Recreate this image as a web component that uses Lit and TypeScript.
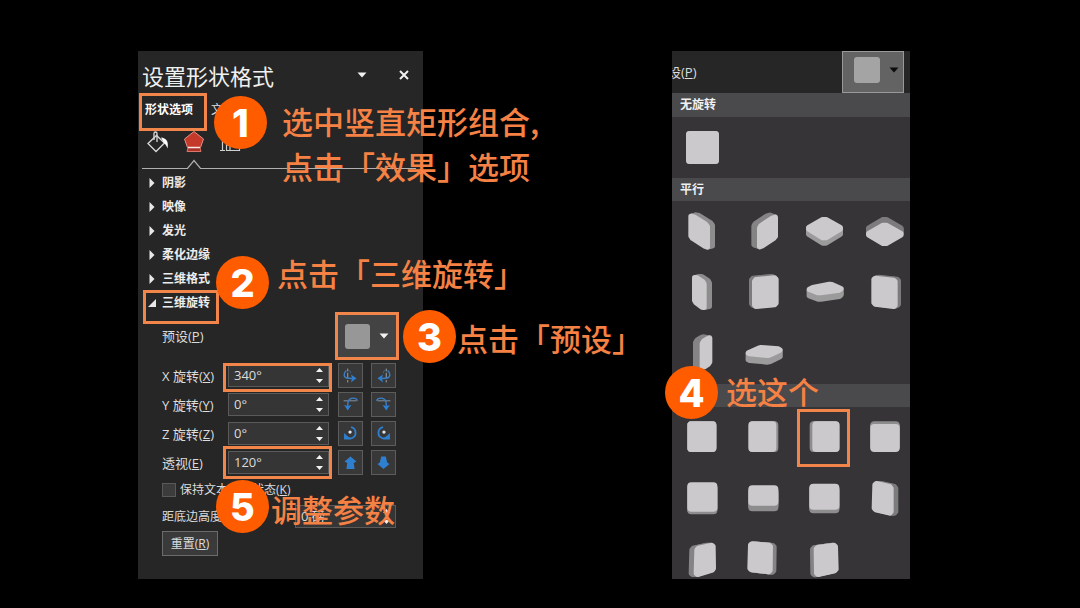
import { LitElement, html, svg, css } from "lit";
import { customElement } from "lit/decorators.js";

type Point = [number, number];
interface Thumb {
  face: Point[];
  depth: Point;
  side?: string;
  round?: number;
  picked?: boolean;
}

const rect = (x1: number, y1: number, x2: number, y2: number): Point[] => [
  [x1 + 12, y1 + 12],
  [x2 - 12, y1 + 12],
  [x2 - 12, y2 - 12],
  [x1 + 12, y2 - 12],
];

const flat = (face: Point[], depth: Point, side?: string): Thumb => ({ face, depth, side, round: 12 });

const NONE: Thumb[] = [flat(rect(42, 42, 141, 141), [0, 0])];

const PARALLEL: Thumb[] = [
  { face: [[57, 46], [66, 48], [100, 69], [106, 77], [106, 138], [98, 135], [62, 112], [57, 105]], depth: [15, -4] },
  { face: [[80, 81], [84, 74], [119, 51], [127, 49], [127, 106], [122, 112], [88, 134], [80, 137]], depth: [-17, -6], side: "#858485" },
  { face: [[44, 80], [86, 56], [96, 56], [139, 80], [139, 84], [96, 110], [86, 110], [44, 84]], depth: [0, 16], side: "#9c9b9c" },
  { face: [[41, 98], [84, 73], [94, 73], [138, 98], [138, 102], [94, 127], [84, 127], [41, 102]], depth: [0, -17], side: "#7d7c7d" },
  { face: [[68, 47], [75, 48], [92, 59], [96, 66], [96, 136], [90, 135], [72, 122], [68, 115]], depth: [16, -3] },
  { face: [[65, 58], [69, 53], [125, 48], [129, 52], [129, 123], [125, 128], [69, 133], [65, 129]], depth: [-9, -4], side: "#7d7c7d" },
  { face: [[46, 82], [56, 77], [106, 67], [114, 68], [141, 80], [136, 84], [80, 92], [72, 92]], depth: [0, 19], side: "#9c9b9c" },
  { face: [[57, 52], [61, 49], [116, 55], [120, 59], [120, 130], [116, 133], [61, 126], [57, 122]], depth: [10, -3], side: "#7d7c7d" },
  { face: [[91, 62], [95, 55], [107, 47], [113, 45], [113, 117], [108, 124], [97, 131], [91, 131]], depth: [-20, -3], side: "#858485" },
  { face: [[46, 90], [76, 76], [84, 74], [136, 78], [141, 81], [112, 95], [104, 97], [50, 92]], depth: [0, 20], side: "#9c9b9c" },
];

const PERSPECTIVE: Thumb[] = [
  flat(rect(46, 43, 133, 135), [0, 0]),
  flat(rect(46, 43, 130, 135), [6, 0]),
  { ...flat(rect(55, 43, 137, 135), [-8, 0]), picked: true },
  flat(rect(46, 51, 134, 135), [0, -8]),
  flat(rect(46, 43, 136, 131), [0, 8]),
  flat(rect(46, 52, 136, 113), [0, 17]),
  flat(rect(46, 47, 136, 125), [0, 11]),
  { face: [[60, 51], [64, 47], [104, 56], [108, 61], [108, 131], [104, 135], [62, 125], [58, 120]], depth: [14, 0], side: "#7d7c7d" },
  { face: [[75, 63], [79, 58], [119, 49], [123, 52], [124, 118], [121, 123], [77, 136], [73, 133]], depth: [-15, 0], side: "#858485" },
  { face: [[53, 48], [57, 45], [108, 49], [112, 53], [111, 124], [107, 128], [55, 122], [51, 118]], depth: [11, 1], side: "#858485" },
  { face: [[67, 60], [71, 56], [120, 49], [124, 53], [126, 120], [122, 125], [72, 136], [68, 132]], depth: [-11, 1], side: "#858485" },
];

const drawThumb = (t: Thumb) => {
  const at = (k: number) =>
    t.face.map(([x, y]) => `${x + t.depth[0] * k},${y + t.depth[1] * k}`).join(" ");
  const side = t.side ?? "#8e8d8e";
  return html`<svg viewBox="0 0 183 183" width="61" height="61" aria-hidden="true"
    stroke-width=${(t.round ?? 8) * 2} stroke-linejoin="round">
    ${[1, 0.75, 0.5, 0.25].map(
      (k) => svg`<polygon points=${at(k)} fill=${side} stroke=${side}></polygon>`
    )}
    <polygon points=${at(0)} fill="#cbc9cb" stroke="#cbc9cb"></polygon>
  </svg>`;
};

const turnSide = svg`
  <path d="M9.500 5v3M9.500 9.500v6M9.500 17.500v2.500" stroke="#a4abb3" fill="none"/>
  <path d="M8 7c-3 2.500-3.500 7 .5 8.200 2 .6 4 .5 6 .5" fill="none" stroke="#3a7fc6" stroke-width="1.500"/>
  <path d="M11 7c1 0 1.500 1.500 1.500 3" fill="none" stroke="#3a6ea3"/>
  <path d="M13 11.500l6 4-6 4.500 1.200-4.300z" fill="#2f7fd0"/>`;
const turnDown = svg`
  <path d="M5 8.500h14" stroke="#8e98a3" fill="none"/>
  <path d="M20 8.500c-1-3.500-8-4.500-10 .5-.5 1.500-.5 3-.5 5" fill="none" stroke="#3a7fc6" stroke-width="1.500"/>
  <path d="M5.500 13l4 1 4-1-4 6z" fill="#2f7fd0"/>`;
const spin = svg`
  <path d="M13 5.500c6.500 1.500 6.500 10 1 12-2 .5-4 .3-6-1.500" fill="none" stroke="#2f7fd0" stroke-width="2"/>
  <path d="M5.500 12v7h7.500z" fill="#2f7fd0"/><circle cx="12" cy="11" r="1.800" fill="#dfe6ee"/>`;
const arrowUp = svg`<path d="M12.500 6l6.500 5.500-3 1.500 1 6.500h-9l1-6.500-3-1.500z" fill="#2f7fd0"/>`;
const arrowDown = svg`<path d="M12.500 19.500L19 14l-2.500-1.500L15 6h-5l-1.500 6.500L6 14z" fill="#2f7fd0"/>`;

interface Axis {
  id: string;
  name: string;
  key: string;
  value: string;
  mark: string;
  glyph: unknown;
  second?: unknown;
  tips: [string, string];
}

const AXES: Axis[] = [
  { id: "rx", name: "X 旋转", key: "X", value: "340°", mark: "mark mark-x", glyph: turnSide, tips: ["向左", "向右"] },
  { id: "ry", name: "Y 旋转", key: "Y", value: "0°", mark: "", glyph: turnDown, tips: ["向上", "向下"] },
  { id: "rz", name: "Z 旋转", key: "Z", value: "0°", mark: "", glyph: spin, tips: ["顺时针", "逆时针"] },
  { id: "persp", name: "透视", key: "E", value: "120°", mark: "mark mark-e", glyph: arrowUp, second: arrowDown, tips: ["缩小视野", "扩大视野"] },
];

const steps = html`<svg viewBox="0 0 9 19" width="9" height="19" aria-hidden="true">
  <path d="M1 6l3.500-4L8 6zM1 13l3.500 4L8 13z" fill="#f2f2f2"></path>
</svg>`;

@customElement("app-root")
export class AppRoot extends LitElement {
  static styles = css`
    :host {
      display: block;
      min-height: 100vh;
      background: #000;
      color: #dcdcdc;
      font: 12px/16px "Open Sans", "Noto Sans CJK SC", sans-serif;
    }
    *, *::before, *::after { box-sizing: border-box; }
    button, input { font: inherit; color: inherit; margin: 0; padding: 0; border: 0; background: none; border-radius: 0; }
    svg { display: block; flex: none; }
    .stage {
      display: grid;
      grid-template-columns: minmax(0, 138fr) 285px minmax(0, 249fr) 238px minmax(0, 170fr);
      padding: 51px 0 29px;
    }
    .board { position: relative; display: flex; }
    .left { grid-column: 2; }
    .right { grid-column: 4; }
    .panel { flex: 1; min-width: 0; background: #262626; }

    .title { display: flex; align-items: center; padding: 6px 13px 0 4px; height: 41px; }
    h1 { flex: 1; margin: 0; font: 400 22px/32px "Noto Sans CJK SC", sans-serif; color: #f0f0f0; }
    .title button { margin-left: 31px; }
    .tabs { display: flex; align-items: center; height: 35px; padding-left: 7px; gap: 18px; }
    .tabs button { position: relative; white-space: nowrap; color: #e4e4e4; }
    .tabs .on { font-weight: 700; color: #fff; }
    .cats { display: flex; align-items: center; height: 30px; padding-left: 8px; gap: 13px; }
    .rule { width: 100%; height: 13px; }
    .list { margin: 1px 0 0; padding: 0; list-style: none; }
    .list button {
      display: flex; align-items: center; gap: 6px; height: 24px; margin-left: 10px;
      position: relative; font-weight: 700; color: #ececec;
    }

    .mark::after { content: ""; position: absolute; border: 3px solid #f28549; pointer-events: none; }
    .tabs .mark::after { inset: -9px -14px -13px -6px; }
    .list .mark::after { inset: -1px -9px -9px -5px; }
    .preset.mark::after { inset: -3px; }
    .mark-x::after { inset: -2px -4px -6px -6px; }
    .mark-e::after { inset: -6px -4px -6px -6px; }

    .form { padding: 0 27px 23px 24px; }
    .row { display: flex; align-items: center; height: 29px; }
    .row > label { flex: 1; white-space: nowrap; }
    .row.top { height: 42px; margin-bottom: 4px; }
    .row.top > label, .axis > label { font-size: 13px; }
    .preset {
      position: relative; display: flex; align-items: center; justify-content: center; gap: 9px;
      width: 58px; height: 42px; background: #434343;
    }
    .swatch { width: 25px; height: 25px; border-radius: 3px; background: #979797; }
    .spin {
      position: relative; display: flex; align-items: center; width: 101px; height: 23px;
      padding: 0 4px 0 5px; background: #353535; border: 1px solid #5a5a5a;
    }
    .axis .spin { margin-right: 1px; }
    .spin input { flex: 1; min-width: 0; width: 10px; height: 20px; padding-bottom: 2px; outline: 0; font-size: 13px; }
    .turn { width: 25px; height: 25px; margin-left: 8px; background: #383838; border: 1px solid #5c5c5c; display: grid; place-items: center; }
    .mirror { transform: scaleX(-1); }
    .check { display: flex; align-items: center; gap: 4px; height: 25px; }
    .check input { appearance: none; width: 14px; height: 14px; background: #3c3c3c; border: 1px solid #595959; }
    .reset { display: block; height: 25px; width: 56px; background: #3a3a3a; border: 1px solid #6b6b6b; }

    .gallery { overflow: hidden; background: #363437; }
    .bar { display: flex; justify-content: space-between; align-items: center; height: 42px; padding-right: 6px; background: #262626; overflow: hidden; }
    .bar label { margin-left: -4px; font-size: 13px; }
    .open {
      display: flex; align-items: center; justify-content: flex-end; gap: 9px;
      width: 62px; height: 42px; padding: 0 4px 4px 0; background: #636363; border: 1px solid #999;
    }
    .open .swatch { background: #a4a4a4; width: 26px; height: 26px; }
    h2 { margin: 0; height: 23px; padding-left: 8px; font: 700 12px/23px "Open Sans", "Noto Sans CJK SC", sans-serif; color: #f0f0f0; background: #4a494b; }
    .first h2 { height: 24px; }
    .grid { display: grid; grid-template-columns: repeat(4, 61px); grid-auto-rows: 61px; }
    .last .grid { grid-template-rows: 61px 61px 50px; }
    .grid button { position: relative; width: 61px; height: 61px; }
    .grid .mark::after { inset: 2px 5px 1px 3px; }

    .badge {
      position: absolute; width: 53px; height: 53px; border-radius: 50%;
      background: #ff5c00; color: #fff; text-align: center;
      font: 800 38px/55px Inter, "Open Sans", sans-serif;
    }
    .say {
      position: absolute; margin: 0; white-space: nowrap; color: #f58144;
      font: 500 31px/45px "Noto Sans CJK SC", sans-serif;
    }
    .b1 { left: 76px; top: 45px; } .s1 { left: 144px; top: 47px; }
    .b2 { left: 78px; top: 205px; } .s2 { left: 139px; top: 199px; }
    .b3 { left: 265px; top: 259px; } .s3 { left: 319px; top: 264px; }
    .b4 { left: -7px; top: 315px; } .s4 { left: 54px; top: 317px; }
    .b5 { left: 78px; top: 429px; } .s5 { left: 133px; top: 435px; }
  `;

  private caret(color: string) {
    return html`<svg viewBox="0 0 10 6" width="10" height="6" aria-hidden="true"><path d="M.5.5h9L5 5.500z" fill=${color}></path></svg>`;
  }

  private effect(name: string, open: boolean) {
    const d = open ? "M8 1v8H0z" : "M1.500 0l5 5-5 5z";
    return html`<li>
      <button class=${open ? "mark" : ""} aria-expanded=${open ? "true" : "false"}>
        <svg viewBox="0 0 8 10" width="8" height="10" aria-hidden="true"><path d=${d} fill="#e8e8e8"></path></svg>
        ${name}
      </button>
    </li>`;
  }

  private axis(a: Axis) {
    return html`<div class="row axis">
      <label for=${a.id}>${a.name}(<u>${a.key}</u>)</label>
      <div class="spin ${a.mark}"><input id=${a.id} .value=${a.value} />${steps}</div>
      <button class="turn" aria-label="${a.name}${a.tips[0]}">
        <svg viewBox="0 0 25 25" width="23" height="23">${a.glyph}</svg>
      </button>
      <button class="turn" aria-label="${a.name}${a.tips[1]}">
        <svg class=${a.second ? "" : "mirror"} viewBox="0 0 25 25" width="23" height="23">${a.second ?? a.glyph}</svg>
      </button>
    </div>`;
  }

  private thumbs(items: Thumb[], name: string) {
    return html`<div class="grid">
      ${items.map(
        (t, i) => html`<button class=${t.picked ? "mark" : ""} aria-label="${name} ${i + 1}">${drawThumb(t)}</button>`
      )}
    </div>`;
  }

  render() {
    return html`<main class="stage" lang="zh-CN">
      <div class="board left">
        <section class="panel">
          <header class="title">
            <h1>设置形状格式</h1>
            <button aria-label="选项">${this.caret("#f2f2f2")}</button>
            <button aria-label="关闭">
              <svg viewBox="0 0 12 12" width="12" height="12"><path d="M2 2l8 8M10 2l-8 8" stroke="#f2f2f2" stroke-width="2"></path></svg>
            </button>
          </header>
          <nav class="tabs">
            <button class="on mark">形状选项</button>
            <button>文本选项</button>
          </nav>
          <div class="cats">
            <button aria-label="填充与线条">
              <svg viewBox="0 0 24 24" width="24" height="24" fill="none" stroke="#d8d8d8" stroke-width="1.300">
                <path d="M2 13.500L10.500 5.500l8 7.500-8.500 8.500z"></path><path d="M8 10V3.500a1.500 1.500 0 0 1 3 0V12"></path>
                <path d="M15 7.500c5 .5 8 3.500 6.500 11-1-2.500-1.500-4-3.500-5.500z" fill="#fff" stroke="none"></path>
              </svg>
            </button>
            <button aria-label="效果">
              <svg viewBox="0 0 22 24" width="22" height="24">
                <path d="M5 17.500l-1 4h14l-1-4z" fill="#a93328"></path>
                <path d="M11 1.500L20.500 9l-3 8.500h-13L1.500 9z" fill="#c5392b" stroke="#e09388" stroke-width="1"></path>
                <path d="M5 17.500h12" stroke="#fbe9e4" stroke-width="1.500"></path>
                <path d="M5 18l-1 3.500h14l-1-3.500" fill="none" stroke="#d9776b"></path>
              </svg>
            </button>
            <button aria-label="大小与属性">
              <svg viewBox="0 0 24 24" width="24" height="24" fill="none" stroke="#d0d0d0" stroke-width="1.200">
                <path d="M2 4.500h5M4.500 4.500v16M2 20.500h5M8.500 9.500h13v11h-13zM12 3v3M12 13v7.500M8.500 15h13"></path>
              </svg>
            </button>
          </div>
          <svg class="rule" viewBox="0 0 285 13" preserveAspectRatio="none" aria-hidden="true">
            <path d="M4 11.500H49.500L56 3.500l6.500 8H278" fill="none" stroke="#b0b0b0" stroke-width="1.200"></path>
          </svg>
          <ul class="list">
            ${["阴影", "映像", "发光", "柔化边缘", "三维格式"].map((n) => this.effect(n, false))}
            ${this.effect("三维旋转", true)}
          </ul>
          <div class="form">
            <div class="row top">
              <label for="preset">预设(<u>P</u>)</label>
              <button id="preset" class="preset mark"><span class="swatch"></span>${this.caret("#f2f2f2")}</button>
            </div>
            ${AXES.map((a) => this.axis(a))}
            <label class="check"><input type="checkbox" /><span>保持文本平面状态(<u>K</u>)</span></label>
            <div class="row">
              <label for="dist">距底边高度(<u>D</u>)</label>
              <div class="spin"><input id="dist" .value=${"0 磅"} />${steps}</div>
            </div>
            <button class="reset">重置(<u>R</u>)</button>
          </div>
        </section>
        <span class="badge b1">1</span>
        <p class="say s1">选中竖直矩形组合,<br />点击「效果」选项</p>
        <span class="badge b2">2</span>
        <p class="say s2">点击「三维旋转」</p>
        <span class="badge b3">3</span>
        <p class="say s3">点击「预设」</p>
        <span class="badge b5">5</span>
        <p class="say s5">调整参数</p>
      </div>

      <div class="board right">
        <section class="panel gallery">
          <div class="bar">
            <label for="open">设(<u>P</u>)</label>
            <button id="open" class="open"><span class="swatch"></span>${this.caret("#0c0c0c")}</button>
          </div>
          <section class="first"><h2>无旋转</h2>${this.thumbs(NONE, "无旋转")}</section>
          <section><h2>平行</h2>${this.thumbs(PARALLEL, "平行")}</section>
          <section class="last"><h2>角度</h2>${this.thumbs(PERSPECTIVE, "角度")}</section>
        </section>
        <span class="badge b4">4</span>
        <p class="say s4">选这个</p>
      </div>
    </main>`;
  }
}
